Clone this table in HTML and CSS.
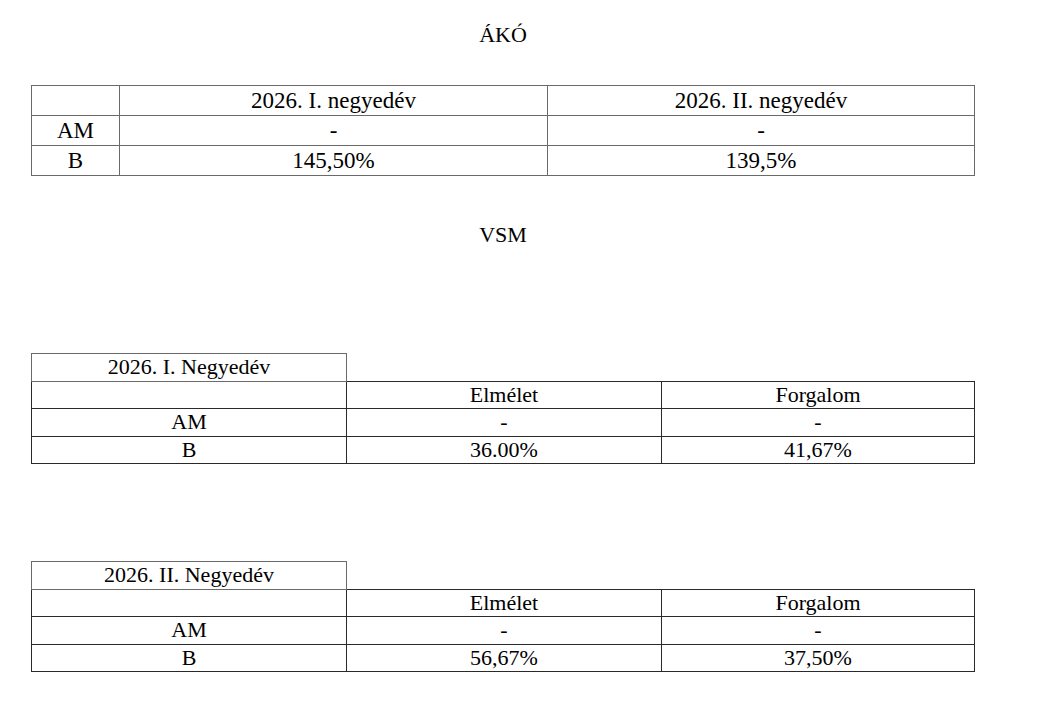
FILE: index.html
```html
<!DOCTYPE html>
<html lang="hu">
<head>
<meta charset="utf-8">
<title>ÁKÓ / VSM</title>
<link rel="stylesheet" href="styles.css">
</head>
<body>
<div class="page">
  <p class="title title-ako">ÁKÓ</p>
  <table class="grid grid-ako">
    <colgroup><col class="c-label"><col class="c-wide"><col class="c-rest"></colgroup>
    <tr><td></td><td>2026. I. negyedév</td><td>2026. II. negyedév</td></tr>
    <tr><td>AM</td><td>-</td><td>-</td></tr>
    <tr><td>B</td><td>145,50%</td><td>139,5%</td></tr>
  </table>

  <p class="title title-vsm">VSM</p>

  <table class="grid grid-vsm vsm-1">
    <colgroup><col class="c-third"><col class="c-third"><col class="c-rest"></colgroup>
    <tr class="head"><td class="caption">2026. I. Negyedév</td><td class="blank"></td><td class="blank"></td></tr>
    <tr><td></td><td>Elmélet</td><td>Forgalom</td></tr>
    <tr><td>AM</td><td>-</td><td>-</td></tr>
    <tr><td>B</td><td>36.00%</td><td>41,67%</td></tr>
  </table>

  <table class="grid grid-vsm vsm-2">
    <colgroup><col class="c-third"><col class="c-third"><col class="c-rest"></colgroup>
    <tr class="head"><td class="caption">2026. II. Negyedév</td><td class="blank"></td><td class="blank"></td></tr>
    <tr><td></td><td>Elmélet</td><td>Forgalom</td></tr>
    <tr><td>AM</td><td>-</td><td>-</td></tr>
    <tr><td>B</td><td>56,67%</td><td>37,50%</td></tr>
  </table>
</div>
</body>
</html>
```

FILE: styles.css
```css
html, body {
  margin: 0;
  padding: 0;
  background: #ffffff;
}

body {
  font-family: "Liberation Serif", "Times New Roman", serif;
  color: #000000;
}

.page {
  width: 944px;
  margin-left: 31px;
  padding-top: 22px;
}

.title {
  margin: 0;
  font-family: "Liberation Serif", "Times New Roman", serif;
  font-size: 22px;
  line-height: 25px;
  text-align: center;
}

.title-vsm {
  margin-top: 46px;
}

.grid {
  width: 944px;
  border-collapse: collapse;
  table-layout: fixed;
  font-family: "Liberation Serif", "Times New Roman", serif;
  font-size: 22px;
}

.grid td {
  padding: 0;
  font-family: "Liberation Serif", "Times New Roman", serif;
  font-size: 22px;
  color: #000000;
  text-align: center;
  vertical-align: middle;
  white-space: nowrap;
}

/* ÁKÓ table */
.grid-ako {
  margin-top: 38px;
}

.grid-ako td {
  border: 1px solid #6a6a6a;
  height: 29px;
  line-height: 25px;
  font-size: 23px;
}

.c-label {
  width: 88px;
}

.c-wide {
  width: 428px;
}

.c-rest {
  width: auto;
}

/* VSM tables */
.c-third {
  width: 315px;
}

.grid-vsm td {
  border: 1px solid #2a2a2a;
  height: 26.5px;
  line-height: 24px;
}

.grid-vsm td.caption {
  border-color: #6a6a6a;
}

.grid-vsm td.blank {
  border-top: none;
  border-right: none;
}

.grid-vsm tr.head td.blank + td.blank {
  border-left: none;
}

.vsm-1 {
  margin-top: 106px;
}

.vsm-2 {
  margin-top: 97px;
}
```
